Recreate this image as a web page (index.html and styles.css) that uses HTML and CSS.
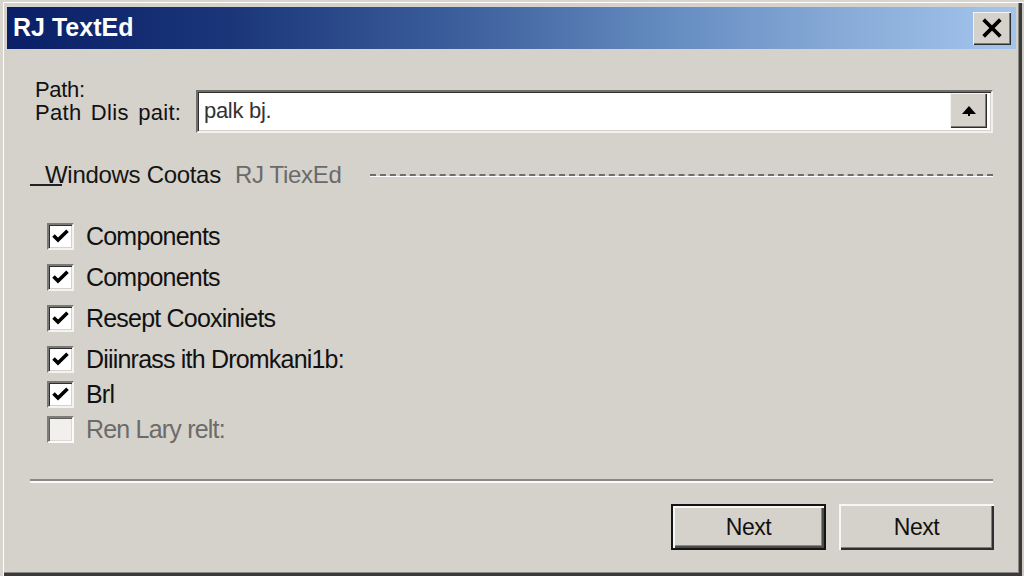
FILE: index.html
```html
<!DOCTYPE html>
<html lang="en">
<head>
<meta charset="utf-8">
<title>RJ TextEd</title>
<link rel="stylesheet" href="styles.css">
</head>
<body>
<div class="window">
  <div class="titlebar">
    <span class="title">RJ TextEd</span>
    <button class="close" aria-label="Close">
      <svg width="20" height="20" viewBox="0 0 20 20"><path d="M3 3 L17 17 M17 3 L3 17" stroke="#000" stroke-width="3.8" stroke-linecap="square" fill="none"/></svg>
    </button>
  </div>
  <div class="content">
    <div class="path-block">
      <div class="labels">
        <div class="label">Path:</div>
        <div class="label wide">Path Dlis pait:</div>
      </div>
      <div class="field">
        <span class="field-text">palk bj.</span>
        <span class="spin">
          <svg width="16" height="14" viewBox="0 0 16 14"><path d="M1 10 L8 2 L15 10 L9 10 L9 12 L7 12 L7 10 Z" fill="#000"/></svg>
        </span>
      </div>
    </div>

    <div class="group-head">
      <span class="mnemonic"></span><span class="group-title">Windows Cootas</span><span class="group-sub">RJ TiexEd</span>
      <div class="dashes"></div>
    </div>

    <div class="checks">
      <div class="check">
        <span class="box"><svg width="17" height="14" viewBox="0 0 17 14"><path d="M1.5 6.5 L6 11 L15.5 1.8" stroke="#000" stroke-width="3.6" fill="none"/></svg></span>
        <span class="check-label">Components</span>
      </div>
      <div class="check">
        <span class="box"><svg width="17" height="14" viewBox="0 0 17 14"><path d="M1.5 6.5 L6 11 L15.5 1.8" stroke="#000" stroke-width="3.6" fill="none"/></svg></span>
        <span class="check-label">Components</span>
      </div>
      <div class="check">
        <span class="box"><svg width="17" height="14" viewBox="0 0 17 14"><path d="M1.5 6.5 L6 11 L15.5 1.8" stroke="#000" stroke-width="3.6" fill="none"/></svg></span>
        <span class="check-label">Resept Cooxiniets</span>
      </div>
      <div class="check">
        <span class="box"><svg width="17" height="14" viewBox="0 0 17 14"><path d="M1.5 6.5 L6 11 L15.5 1.8" stroke="#000" stroke-width="3.6" fill="none"/></svg></span>
        <span class="check-label">Diiinrass ith Dromkani1b:</span>
      </div>
      <div class="check compact">
        <span class="box"><svg width="17" height="14" viewBox="0 0 17 14"><path d="M1.5 6.5 L6 11 L15.5 1.8" stroke="#000" stroke-width="3.6" fill="none"/></svg></span>
        <span class="check-label">Brl</span>
      </div>
      <div class="check compact disabled">
        <span class="box"></span>
        <span class="check-label">Ren Lary relt:</span>
      </div>
    </div>

    <div class="separator"></div>

    <div class="buttons">
      <button class="btn default">Next</button>
      <button class="btn">Next</button>
    </div>
  </div>
</div>
</body>
</html>
```
FILE: styles.css
```css
html, body {
  margin: 0;
  padding: 0;
}
body {
  width: 1024px;
  height: 576px;
  overflow: hidden;
  font-family: "Liberation Sans", Arial, sans-serif;
  background: #d5d2cb;
}
.window {
  width: 1024px;
  height: 576px;
  box-sizing: border-box;
  padding: 7px 8px 3px 7px;
  background: #d5d2cb;
  display: flex;
  flex-direction: column;
  box-shadow:
    inset 3px 2px 0 #d8d5cf,
    inset 4px 3px 0 #ffffff,
    inset -2px 0 0 #cfccc5,
    inset -5px -3px 0 #3a3a3a,
    inset -6px -4px 0 #8a8883;
}
.titlebar {
  height: 42px;
  flex: none;
  display: flex;
  align-items: center;
  justify-content: space-between;
  padding: 0 5px 0 6px;
  background: linear-gradient(90deg, #0a1f66 0%, #1a3679 22%, #3d5f9c 45%, #648bc0 65%, #86a9d6 82%, #a3c5ed 100%);
}
.title {
  color: #ffffff;
  font-weight: bold;
  font-size: 25px;
  line-height: 42px;
  margin-top: -2px;
}
.close {
  width: 38px;
  height: 33px;
  padding: 0;
  margin: 0;
  display: flex;
  align-items: center;
  justify-content: center;
  background: #d5d2cb;
  border: 0;
  box-shadow:
    inset 1px 1px 0 #f4f3f0,
    inset -1px -1px 0 #2e2e2e,
    inset -2px -2px 0 #7d7b76;
}
.content {
  flex: 1;
  padding: 29px 23px 0 23px;
  display: flex;
  flex-direction: column;
}
.path-block {
  display: flex;
  align-items: flex-start;
  margin-left: 5px;
}
.labels {
  width: 161px;
  flex: none;
}
.label {
  font-size: 22px;
  line-height: 23px;
  color: #111;
  letter-spacing: -0.3px;
}
.label.wide {
  word-spacing: 3px;
  letter-spacing: 0.3px;
}
.field {
  flex: 1;
  height: 43px;
  margin-top: 12px;
  box-sizing: border-box;
  background: #ffffff;
  display: flex;
  align-items: center;
  justify-content: space-between;
  padding: 0 4px 2px 6px;
  border: 2px solid;
  border-color: #6f6e6b #f2f1ee #f2f1ee #6f6e6b;
  box-shadow: inset 1px 1px 0 #2f2f2f, inset -1px -1px 0 #d5d2cb;
}
.field-text {
  font-size: 22px;
  color: #333;
  letter-spacing: -0.3px;
}
.spin {
  width: 37px;
  height: 35px;
  box-sizing: border-box;
  display: flex;
  align-items: center;
  justify-content: center;
  background: #d5d2cb;
  box-shadow:
    inset 1px 1px 0 #f4f3f0,
    inset -1px -1px 0 #2e2e2e,
    inset -2px -2px 0 #7d7b76;
}
.group-head {
  display: flex;
  align-items: baseline;
  margin-top: 28px;
  font-size: 24px;
  line-height: 28px;
  letter-spacing: -0.3px;
}
.mnemonic {
  display: inline-block;
  width: 32px;
  height: 0;
  border-bottom: 2px solid #222;
  margin-right: -17px;
  align-self: flex-end;
  margin-bottom: 3px;
}
.group-title {
  color: #151515;
}
.group-sub {
  color: #6a6a6a;
  margin-left: 14px;
}
.dashes {
  flex: 1;
  align-self: center;
  margin-left: 28px;
  height: 0;
  border-top: 2px dashed #6e6d6a;
  border-bottom: 1px solid #ffffff;
}
.checks {
  display: flex;
  flex-direction: column;
  gap: 13px;
  margin-top: 33px;
  margin-left: 17px;
}
.check {
  display: flex;
  align-items: center;
  height: 28px;
}
.check.compact {
  margin-top: -6px;
}
.box {
  width: 27px;
  height: 27px;
  box-sizing: border-box;
  flex: none;
  display: flex;
  align-items: center;
  justify-content: center;
  background: #ffffff;
  border: 2px solid;
  border-color: #7a7975 #f4f3f0 #f4f3f0 #7a7975;
  box-shadow: inset 1px 1px 0 #2f2f2f, inset -1px -1px 0 #d5d2cb;
}
.check-label {
  margin-left: 12px;
  font-size: 25px;
  line-height: 28px;
  letter-spacing: -0.8px;
  color: #111;
}
.check.disabled .box {
  background: #f1f0ec;
  border-color: #7f7d79 #fbfaf8 #fbfaf8 #7f7d79;
  box-shadow: inset 1px 1px 0 #5f5e5b, inset -1px -1px 0 #dcd9d3;
}
.check.disabled .check-label {
  color: #6c6b68;
}
.separator {
  margin-top: 36px;
  height: 0;
  border-top: 2px solid #8a8883;
  border-bottom: 2px solid #fbfaf8;
}
.buttons {
  display: flex;
  justify-content: flex-end;
  gap: 13px;
  margin-top: 21px;
  margin-right: -1px;
}
.btn {
  width: 155px;
  height: 46px;
  box-sizing: border-box;
  margin: 0;
  padding: 0;
  font-family: "Liberation Sans", Arial, sans-serif;
  font-size: 23px;
  letter-spacing: -0.5px;
  color: #111;
  background: #d5d2cb;
  border: 0;
  box-shadow:
    inset 2px 2px 0 #f7f6f3,
    inset -2px -2px 0 #2e2e2e,
    inset -3px -3px 0 #807e79;
}
.btn.default {
  border: 2px solid #141414;
  box-shadow:
    inset 2px 2px 0 #f7f6f3,
    inset -2px -2px 0 #4a4a48,
    inset -3px -3px 0 #8a8883;
}
```
